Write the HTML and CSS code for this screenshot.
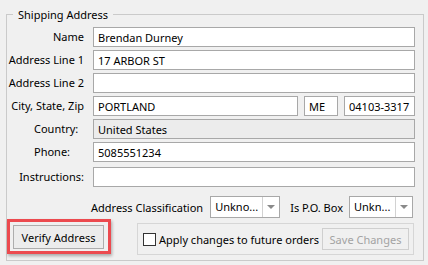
FILE: index.html
```html
<!DOCTYPE html>
<html lang="en">
<head>
    <meta charset="UTF-8">
    <meta name="viewport" content="width=device-width, initial-scale=1.0">
    <title>Shipping Address</title>
    <link rel="stylesheet" href="styles.css">
</head>
<body>
    <fieldset class="group">
        <legend>Shipping Address</legend>
        <div class="form">
            <label class="lbl">Name</label>
            <input type="text" class="field" value="Brendan Durney">
            <label class="lbl">Address Line 1</label>
            <input type="text" class="field" value="17 ARBOR ST">
            <label class="lbl">Address Line 2</label>
            <input type="text" class="field" value="">
            <label class="lbl">City, State, Zip</label>
            <div class="csz">
                <input type="text" class="field city" value="PORTLAND">
                <input type="text" class="field state" value="ME">
                <input type="text" class="field zip" value="04103-3317">
            </div>
            <label class="lbl lbl-left">Country:</label>
            <input type="text" class="field field-ro" value="United States" readonly>
            <label class="lbl lbl-left">Phone:</label>
            <input type="text" class="field" value="5085551234">
            <label class="lbl">Instructions:</label>
            <input type="text" class="field" value="">
        </div>

        <div class="classify">
            <span class="cls-label">Address Classification</span>
            <div class="combo combo-wide">
                <span class="combo-text">Unkno...</span>
                <span class="combo-btn"></span>
            </div>
            <span class="po-label">Is P.O. Box</span>
            <div class="combo combo-narrow">
                <span class="combo-text">Unkn...</span>
                <span class="combo-btn"></span>
            </div>
        </div>

        <div class="actions">
            <div class="highlight">
                <button type="button" class="btn btn-verify">Verify Address</button>
            </div>
            <div class="apply">
                <label class="check"><span class="box"></span>Apply changes to future orders</label>
                <button type="button" class="btn btn-save" disabled>Save Changes</button>
            </div>
        </div>
    </fieldset>
</body>
</html>
```

FILE: styles.css
```css
body
{
    margin: 0;
    background-color: #f0f0f0;
    font-family: "Noto Sans", sans-serif;
    font-size: 11px;
    color: #000;
}

.group
{
    margin: 6px 4px 0 6px;
    padding: 4px 8px 5px 0;
    border: 1px solid #cacaca;
    min-width: 0;
}
.group legend
{
    margin-left: 6px;
    padding: 0 5px;
    line-height: 17px;
}

.form
{
    display: grid;
    grid-template-columns: 77px 1fr;
    grid-template-rows: repeat(6, 20px) 22px;
    column-gap: 9px;
    row-gap: 3px;
    align-items: end;
}
.lbl
{
    line-height: 20px;
    text-align: right;
    white-space: nowrap;
}
.lbl-left
{
    text-align: left;
    padding-left: 27px;
}

.field
{
    box-sizing: border-box;
    width: 100%;
    min-width: 0;
    height: 20px;
    margin: 0;
    padding: 0 4px;
    border: 1px solid #a8a8a8;
    background-color: #fff;
    font-family: inherit;
    font-size: 11px;
    color: #000;
}
.field:focus
{
    outline: none;
}
.field-ro
{
    background-color: #ececec;
}

.csz
{
    display: flex;
    gap: 6px;
}
.csz .city
{
    flex: 1;
}
.csz .state
{
    width: 34px;
    flex: none;
}
.csz .zip
{
    width: 71px;
    flex: none;
}

.classify
{
    display: flex;
    justify-content: flex-end;
    align-items: center;
    height: 22px;
    margin: 9px 2px 0 0;
}
.cls-label
{
    margin-right: 7px;
}
.po-label
{
    margin-left: 10px;
    margin-right: 6px;
}
.combo
{
    box-sizing: border-box;
    display: flex;
    height: 22px;
    border: 1px solid #a8a8a8;
    background-color: #fff;
}
.combo-wide
{
    width: 70px;
}
.combo-narrow
{
    width: 64px;
}
.combo-text
{
    flex: 1;
    padding-left: 4px;
    line-height: 20px;
    white-space: nowrap;
    overflow: hidden;
}
.combo-btn
{
    width: 16px;
    border-left: 1px solid #d2d2d2;
    display: flex;
    align-items: center;
    justify-content: center;
}
.combo-btn::after
{
    content: "";
    border-left: 4px solid transparent;
    border-right: 4px solid transparent;
    border-top: 4px solid #8a8a8a;
}

.actions
{
    display: flex;
    align-items: flex-start;
    margin: 1px 1px 0 0;
}
.highlight
{
    border: 3px solid #ec4a4f;
    padding: 3px 4px 2px 3px;
    box-shadow: 1px 2px 3px rgba(0, 0, 0, 0.3);
}
.btn
{
    box-sizing: border-box;
    margin: 0;
    padding: 0;
    font-family: inherit;
    font-size: 11px;
    color: #000;
    background-color: #ececec;
    border: 1px solid #adadad;
}
.btn-verify
{
    width: 91px;
    height: 24px;
}
.apply
{
    flex: 1;
    box-sizing: border-box;
    display: flex;
    align-items: center;
    height: 32px;
    margin: 4px 0 0 26px;
    padding: 0 4px 0 5px;
    border: 1px solid #d6d6d6;
}
.check
{
    display: flex;
    align-items: center;
    white-space: nowrap;
}
.box
{
    box-sizing: border-box;
    width: 13px;
    height: 13px;
    margin-right: 3px;
    border: 1px solid #333;
    background-color: #fff;
}
.btn-save
{
    margin-left: auto;
    width: 87px;
    height: 22px;
    color: #a3a3a3;
    background-color: #f0f0f0;
    border-color: #cfcfcf;
}
```
